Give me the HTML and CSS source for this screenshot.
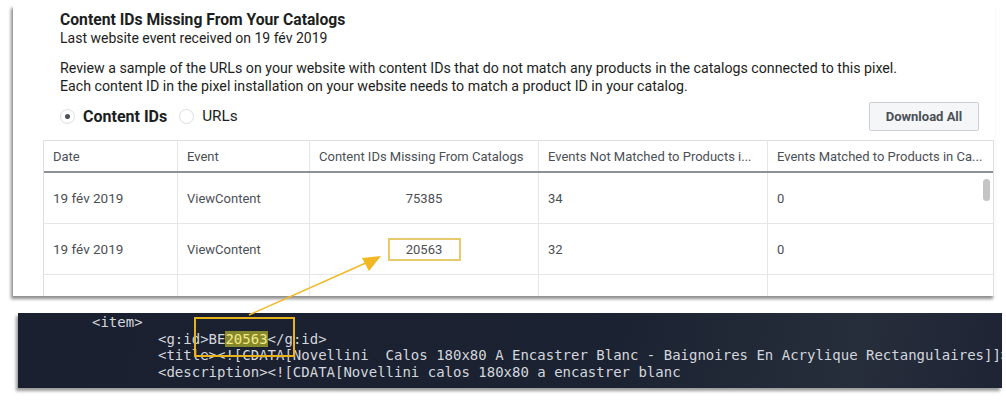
FILE: index.html
```html
<!DOCTYPE html>
<html>
<head>
<meta charset="utf-8">
<link rel="stylesheet" href="styles.css">
</head>
<body>
<div class="stage">
  <section class="card">
    <div class="intro">
      <h1 class="title">Content IDs Missing From Your Catalogs</h1>
      <p class="subtitle">Last website event received on 19 fév 2019</p>
      <p class="desc">Review a sample of the URLs on your website with content IDs that do not match any products in the catalogs connected to this pixel.<br>Each content ID in the pixel installation on your website needs to match a product ID in your catalog.</p>
    </div>
    <div class="controls">
      <div class="radios">
        <span class="radio checked"></span><span class="radio-label active">Content IDs</span>
        <span class="radio"></span><span class="radio-label">URLs</span>
      </div>
      <button class="btn">Download All</button>
    </div>
    <div class="table">
      <div class="row head">
        <div class="cell c1">Date</div>
        <div class="cell c2">Event</div>
        <div class="cell c3">Content IDs Missing From Catalogs</div>
        <div class="cell c4">Events Not Matched to Products i...</div>
        <div class="cell c5">Events Matched to Products in Ca...</div>
      </div>
      <div class="row">
        <div class="cell c1">19 fév 2019</div>
        <div class="cell c2">ViewContent</div>
        <div class="cell c3 center">75385</div>
        <div class="cell c4">34</div>
        <div class="cell c5">0</div>
      </div>
      <div class="row">
        <div class="cell c1">19 fév 2019</div>
        <div class="cell c2">ViewContent</div>
        <div class="cell c3 center"><span class="boxed">20563</span></div>
        <div class="cell c4">32</div>
        <div class="cell c5">0</div>
      </div>
      <div class="row short">
        <div class="cell c1"></div>
        <div class="cell c2"></div>
        <div class="cell c3"></div>
        <div class="cell c4"></div>
        <div class="cell c5"></div>
      </div>
      <div class="scroll-thumb"></div>
    </div>
  </section>

  <section class="code">
    <div class="line l1">&lt;item&gt;</div>
    <div class="line l2">&lt;g:id&gt;BE<mark class="hit">20563</mark>&lt;/g:id&gt;</div>
    <div class="line l2">&lt;title&gt;&lt;![CDATA[Novellini  Calos 180x80 A Encastrer Blanc - Baignoires En Acrylique Rectangulaires]]&gt;</div>
    <div class="line l2">&lt;description&gt;&lt;![CDATA[Novellini calos 180x80 a encastrer blanc</div>
  </section>

  <div class="code-box"></div>
  <svg class="arrow" width="1006" height="400" viewBox="0 0 1006 400">
    <line x1="249" y1="315" x2="368" y2="262" stroke="#f2b824" stroke-width="1.5"/>
    <polygon points="381,256 362,258 369,271" fill="#f2b824"/>
  </svg>
</div>
</body>
</html>
```

FILE: styles.css
```css
* { box-sizing: border-box; }
html, body { margin: 0; padding: 0; background: #ffffff; }
body {
  font-family: Roboto, "Liberation Sans", Arial, sans-serif;
  color: #1c1e21;
}
.stage {
  position: relative;
  width: 1006px;
  height: 400px;
  overflow: hidden;
  padding-top: 5px;
}
.card {
  margin-left: 13px;
  width: 982px;
  height: 291px;
  background: #ffffff;
  box-shadow: -2px 3px 3px rgba(0, 0, 0, 0.45);
  overflow: hidden;
}
.intro { padding: 6px 0 0 47px; }
.title {
  margin: 0;
  font-size: 15.7px;
  line-height: 18px;
  font-weight: 700;
  color: #1c1e21;
}
.subtitle {
  margin: 0;
  font-size: 14px;
  line-height: 18px;
  color: #1c1e21;
}
.desc {
  margin: 12px 0 0;
  font-size: 14.2px;
  line-height: 18px;
  color: #1c1e21;
}
.controls {
  display: flex;
  align-items: center;
  justify-content: space-between;
  height: 28px;
  margin-top: 7px;
  padding-left: 47px;
  padding-right: 16px;
}
.radios { display: flex; align-items: center; }
.radio {
  width: 15px;
  height: 15px;
  border-radius: 50%;
  border: 1px solid #dadde1;
  background: #fff;
  position: relative;
}
.radio.checked::after {
  content: "";
  position: absolute;
  left: 4px;
  top: 4px;
  width: 5px;
  height: 5px;
  border-radius: 50%;
  background: #4b4f56;
}
.radio-label {
  font-size: 15.3px;
  margin-left: 8px;
  margin-right: 12px;
  color: #1c1e21;
}
.radio-label.active { font-weight: 700; font-size: 16px; }
.btn {
  height: 29px;
  width: 110px;
  border: 1px solid #ccd0d5;
  border-radius: 2px;
  background: #f5f6f7;
  font-family: inherit;
  font-size: 13px;
  font-weight: 700;
  color: #4b4f56;
}
.table {
  position: relative;
  margin-top: 10px;
  margin-left: 30px;
  width: 951px;
  border-top: 1px solid #dddfe2;
  border-left: 1px solid #dddfe2;
  border-right: 1px solid #dddfe2;
}
.row {
  display: flex;
  height: 51px;
  border-bottom: 1px solid #e4e6e9;
}
.row.head {
  height: 32px;
  border-bottom: 2px solid #8d9096;
}
.row.short { height: 30px; border-bottom: none; }
.cell {
  display: flex;
  align-items: center;
  padding-left: 9px;
  font-size: 13px;
  color: #4b4f56;
  border-right: 1px solid #e4e6e9;
  white-space: nowrap;
  overflow: hidden;
}
.row:not(.head) .c1 { font-size: 13.5px; }
.c1 { width: 134px; }
.c2 { width: 132px; }
.c3 { width: 229px; }
.c4 { width: 229px; }
.c5 { flex: 1; border-right: none; }
.cell.center { justify-content: center; padding-left: 0; }
.boxed {
  display: inline-flex;
  align-items: center;
  justify-content: center;
  width: 73px;
  height: 23px;
  border: 2px solid #e7c96e;
}
.scroll-thumb {
  position: absolute;
  right: 3px;
  top: 38px;
  width: 7px;
  height: 22px;
  border-radius: 4px;
  background: #c4c4c4;
}
.code {
  margin-top: 17px;
  margin-left: 18px;
  width: 984px;
  height: 75px;
  background: linear-gradient(100deg, #1a2030 0%, #1b2231 60%, #262d3b 85%, #1e2434 100%);
  box-shadow: -2px 3px 3px rgba(0, 0, 0, 0.4);
  padding-top: 1px;
  font-family: "DejaVu Sans Mono", "Liberation Mono", monospace;
  font-size: 14px;
  line-height: 16.7px;
  color: #d3d6dc;
  overflow: hidden;
}
.line { white-space: pre; }
.line.l1 { padding-left: 74px; }
.line.l2 { padding-left: 140px; }
.hit {
  background: #86882c;
  color: #f3ea84;
}
.code-box {
  position: absolute;
  left: 194px;
  top: 317px;
  width: 101px;
  height: 40px;
  border: 2px solid #e8b21a;
}
.arrow {
  position: absolute;
  left: 0;
  top: 0;
  pointer-events: none;
}
```
